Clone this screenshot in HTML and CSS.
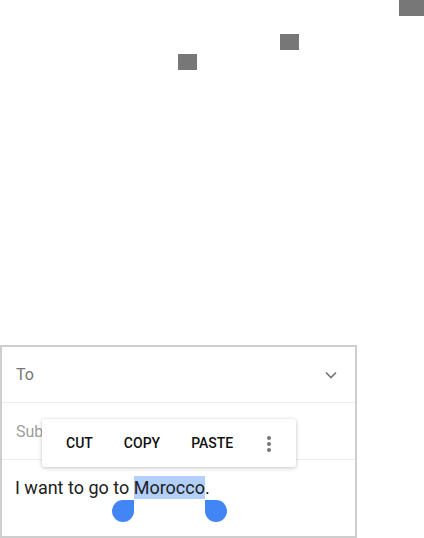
FILE: index.html
```html
<!DOCTYPE html>
<html>
<head>
<meta charset="utf-8">
<link rel="stylesheet" href="styles.css">
</head>
<body>
<div class="canvas">
  <span class="sq sq1"></span>
  <span class="sq sq2"></span>
  <span class="sq sq3"></span>
</div>
<div class="card">
  <div class="row row-to">
    <span class="label">To</span>
    <svg class="chev" width="12" height="8" viewBox="0 0 12 8"><path d="M1 1.5 L6 6.5 L11 1.5" fill="none" stroke="#757575" stroke-width="1.6"/></svg>
  </div>
  <div class="row row-sub">
    <span class="placeholder">Subject</span>
  </div>
  <div class="body">
    <p class="text">I want to go to <span class="sel">Morocco<span class="handle hl"></span><span class="handle hr"></span></span>.</p>
  </div>
  <div class="menu">
    <span class="item">CUT</span>
    <span class="item">COPY</span>
    <span class="item">PASTE</span>
    <span class="more"><i></i><i></i><i></i></span>
  </div>
</div>
</body>
</html>
```
FILE: styles.css
```css
html, body {
  margin: 0;
  padding: 0;
  background: #fff;
  font-family: Roboto, "Noto Sans", sans-serif;
}
.canvas {
  position: relative;
  height: 345px;
  overflow: hidden;
}
.sq {
  position: absolute;
  background: #777777;
  height: 16px;
  width: 19px;
}
.sq1 { left: 399px; top: 0; width: 25px; }
.sq2 { left: 280px; top: 34px; }
.sq3 { left: 178px; top: 54px; }

.card {
  position: relative;
  width: 353px;
  height: 189px;
  border: 2px solid #cecece;
  background: #fff;
}
.row {
  display: flex;
  align-items: center;
  padding: 0 17px 0 14px;
  border-bottom: 1px solid #eeeeee;
}
.row-to { height: 55px; justify-content: space-between; }
.row-sub { height: 56px; }
.label {
  font-size: 16px;
  color: #757575;
}
.placeholder {
  font-size: 16px;
  color: #9e9e9e;
}
.chev { display: block; margin-right: 1px; }
.body {
  padding: 16px 13px 0;
}
.text {
  margin: 0;
  font-size: 18px;
  line-height: 23px;
  color: #212121;
}
.sel {
  position: relative;
  background: #b3cffb;
  display: inline-block;
}
.handle {
  position: absolute;
  top: 24px;
  width: 22px;
  height: 22px;
  background: #4285f4;
  border-radius: 50%;
}
.hl { left: -22px; border-top-right-radius: 0; }
.hr { right: -22px; border-top-left-radius: 0; }

.menu {
  position: absolute;
  left: 40px;
  top: 72px;
  width: 254px;
  height: 48px;
  display: flex;
  align-items: center;
  padding-left: 24px;
  box-sizing: border-box;
  background: #fff;
  border-radius: 2px;
  box-shadow: 0 1px 4px rgba(0,0,0,0.22), 0 0 1px rgba(0,0,0,0.12);
}
.item {
  font-size: 14px;
  font-weight: 500;
  color: #111;
  margin-right: 31px;
}
.item:nth-child(3) { margin-right: 34px; }
.more {
  display: flex;
  flex-direction: column;
  gap: 2px;
  margin-top: 1px;
}
.more i {
  display: block;
  width: 4px;
  height: 4px;
  border-radius: 50%;
  background: #757575;
}
```
